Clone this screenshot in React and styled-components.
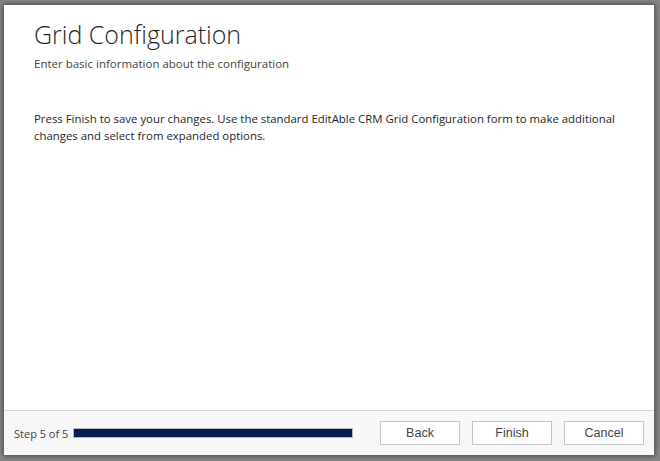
import React from "react";
import styled, { createGlobalStyle } from "styled-components";

const GlobalStyle = createGlobalStyle`
  html, body {
    margin: 0;
    padding: 0;
    background: #858585;
  }
  body {
    font-family: "Open Sans", "Liberation Sans", sans-serif;
  }
`;

const Backdrop = styled.div`
  width: 660px;
  height: 461px;
  box-sizing: border-box;
  padding: 5px 6px 6px 4px;
  background: #858585;
`;

const Dialog = styled.div`
  width: 650px;
  height: 450px;
  display: flex;
  flex-direction: column;
  background: #ffffff;
  box-shadow: 0 0 5px 1px rgba(0, 0, 0, 0.45);
`;

const Header = styled.header`
  padding: 12px 30px 0 30px;
`;

const Title = styled.h1`
  margin: 0;
  font-family: "Open Sans", "Liberation Sans", sans-serif;
  font-weight: 300;
  font-size: 25px;
  line-height: 34px;
  color: #262626;
`;

const Subtitle = styled.p`
  margin: 5px 0 0;
  font-size: 11.5px;
  line-height: 16px;
  color: #444444;
`;

const Main = styled.main`
  flex: 1;
  padding: 38px 30px 0 30px;
`;

const Message = styled.p`
  margin: 0;
  font-size: 11.4px;
  line-height: 17px;
  color: #262626;
`;

const Footer = styled.footer`
  height: 44px;
  display: flex;
  align-items: center;
  padding: 0 10px;
  background: #f8f8f8;
  border-top: 1px solid #d6d6d6;
`;

const StepLabel = styled.span`
  font-size: 11px;
  color: #444444;
  margin-right: 5px;
`;

const Progress = styled.div`
  width: 280px;
  height: 10px;
  box-sizing: border-box;
  border: 1px solid #b8b8b8;
  background: #ffffff;
`;

const ProgressFill = styled.div`
  height: 100%;
  background: #002050;
`;

const Buttons = styled.div`
  margin-left: auto;
  display: flex;
  gap: 12px;
`;

const Button = styled.button`
  width: 80px;
  height: 24px;
  padding: 0;
  background: #ffffff;
  border: 1px solid #c6c6c6;
  font-family: "Liberation Sans", Arial, sans-serif;
  font-size: 12.5px;
  color: #444444;
  cursor: pointer;
`;

const App = () => {
  const step = 5;
  const total = 5;

  return (
    <>
      <GlobalStyle />
      <Backdrop>
        <Dialog>
          <Header>
            <Title>Grid Configuration</Title>
            <Subtitle>Enter basic information about the configuration</Subtitle>
          </Header>
          <Main>
            <Message>
              Press Finish to save your changes. Use the standard EditAble CRM Grid Configuration form to make additional
              changes and select from expanded options.
            </Message>
          </Main>
          <Footer>
            <StepLabel>
              Step {step} of {total}
            </StepLabel>
            <Progress>
              <ProgressFill style={{ width: `${(step / total) * 100}%` }} />
            </Progress>
            <Buttons>
              <Button>Back</Button>
              <Button>Finish</Button>
              <Button>Cancel</Button>
            </Buttons>
          </Footer>
        </Dialog>
      </Backdrop>
    </>
  );
};

export default App;
